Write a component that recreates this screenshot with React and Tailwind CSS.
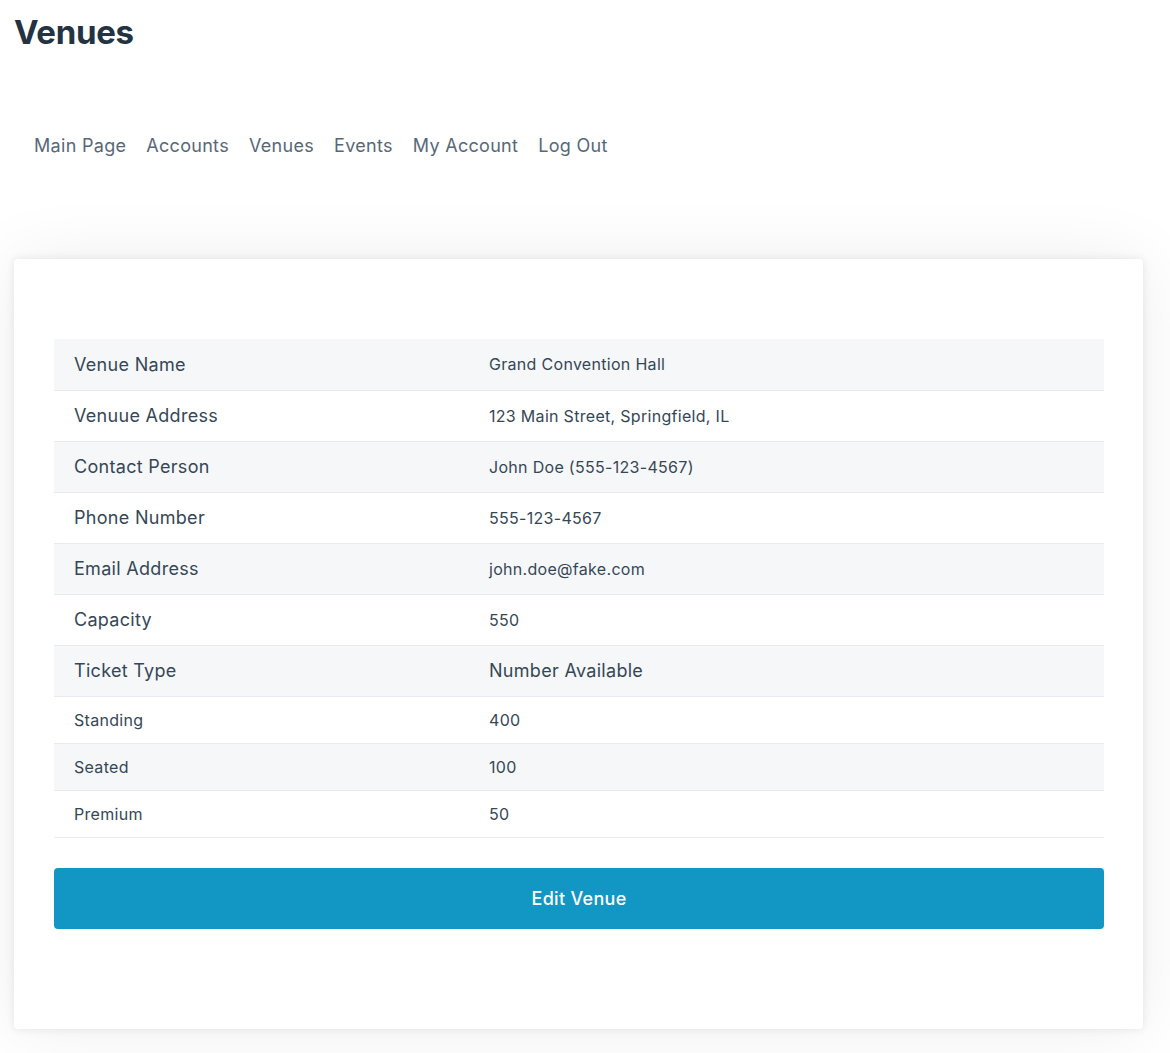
const details = [
  ["Venue Name", "Grand Convention Hall"],
  ["Venuue Address", "123 Main Street, Springfield, IL"],
  ["Contact Person", "John Doe (555-123-4567)"],
  ["Phone Number", "555-123-4567"],
  ["Email Address", "john.doe@fake.com"],
  ["Capacity", "550"],
];

const tickets = [
  ["Standing", "400"],
  ["Seated", "100"],
  ["Premium", "50"],
];

const navLinks = ["Main Page", "Accounts", "Venues", "Events", "My Account", "Log Out"];

export default function App() {
  return (
    <div className="min-h-screen bg-white font-['Inter',sans-serif] text-[#354756] tracking-[0.3px]">
      <header className="px-[14px] pt-[10px]">
        <h1 className="text-[33px] font-bold leading-[44px] text-[#243342] tracking-[-0.3px]">Venues</h1>
        <nav className="mt-[80px] flex gap-5 px-5">
          {navLinks.map((l) => (
            <a key={l} href="#" className="text-[18px] leading-6 text-[#566878]">
              {l}
            </a>
          ))}
        </nav>
      </header>

      <main className="px-[14px] pt-[101px] pb-6 pr-[27px]">
        <div className="rounded bg-white pl-10 pr-[39px] pt-20 pb-[100px] shadow-[0_0_10px_rgba(0,0,0,0.09),0_0_70px_rgba(0,0,0,0.07)]">
          <table className="w-full border-collapse">
            <tbody>
              {details.map(([k, v], i) => (
                <tr key={k} className={`border-b border-[#e6eaee] ${i % 2 === 0 ? "bg-[#f5f7f9]" : "bg-white"}`}>
                  <th className="w-[435px] h-[51px] px-5 text-left text-[18px] font-normal">{k}</th>
                  <td className="h-[51px] px-0 text-[16px]">{v}</td>
                </tr>
              ))}
              <tr className="border-b border-[#e6eaee] bg-[#f5f7f9]">
                <th className="h-[51px] px-5 text-left text-[18px] font-normal">Ticket Type</th>
                <th className="h-[51px] text-left text-[18px] font-normal">Number Available</th>
              </tr>
              {tickets.map(([k, v], i) => (
                <tr key={k} className={`border-b border-[#e6eaee] ${i % 2 === 1 ? "bg-[#f5f7f9]" : "bg-white"}`}>
                  <td className="h-[47px] px-5 text-[16px]">{k}</td>
                  <td className="h-[47px] text-[16px]">{v}</td>
                </tr>
              ))}
            </tbody>
          </table>
          <button className="mt-[30px] h-[61px] w-full rounded bg-[#1296c3] text-[18px] font-medium text-white">
            Edit Venue
          </button>
        </div>
      </main>
    </div>
  );
}
